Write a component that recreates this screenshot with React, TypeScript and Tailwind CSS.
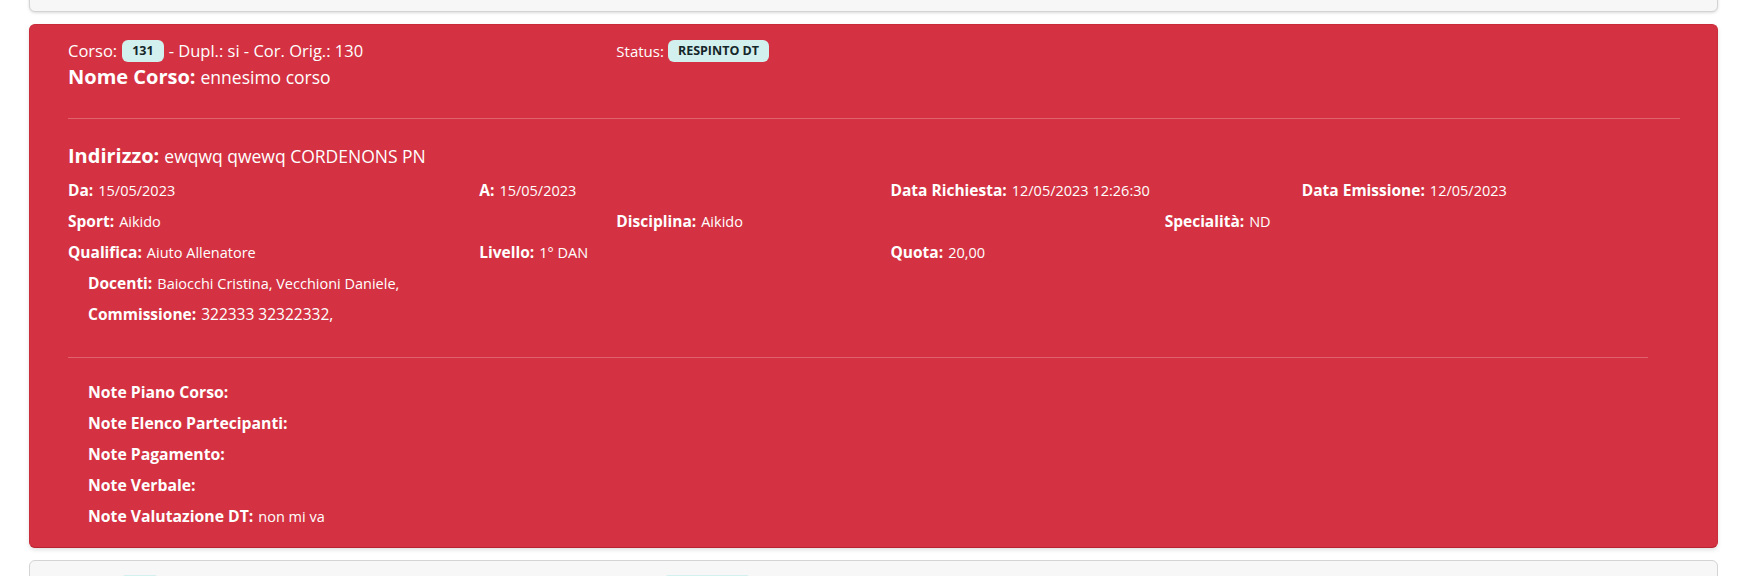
import type { ReactElement, ReactNode } from 'react'

type Field = { label: string; value?: string }

function Badge({ children }: { children: ReactNode }): ReactElement {
  return (
    <span className="inline-flex h-[22px] items-center rounded-[6px] bg-[#d2f0ed] px-[10px] text-[12.5px] font-bold text-[#15262b]">
      {children}
    </span>
  )
}

function Item({ label, value, wide = false }: Field & { wide?: boolean }): ReactElement {
  return (
    <div className="flex h-[31px] items-center whitespace-nowrap">
      <span className={wide ? 'text-[15.75px] font-bold' : 'text-[15.5px] font-bold'}>{label}:</span>
      {value ? <span className="ml-[5px] text-[14.5px]">{value}</span> : null}
    </div>
  )
}

const notes: Field[] = [
  { label: 'Note Piano Corso' },
  { label: 'Note Elenco Partecipanti' },
  { label: 'Note Pagamento' },
  { label: 'Note Verbale' },
  { label: 'Note Valutazione DT', value: 'non mi va' }
]

export default function App(): ReactElement {
  return (
    <div className="h-[576px] overflow-hidden bg-white pl-[29px] pr-[28px] font-['Open_Sans',sans-serif] text-white">
      <div className="-mt-[40px] h-[52px] rounded-[6px] border border-[#d4d4d4] bg-[#f7f7f7] shadow-[0_1px_3px_rgba(0,0,0,0.15)]" />

      <div className="mt-[12px] rounded-[6px] border border-[#c92c3b] border-b-[#b8232f] bg-[#d43242] pb-[15px] pl-[38px] pt-[14px] shadow-[0_2px_4px_rgba(0,0,0,0.12)]">
        <div className="grid h-[22px] w-[1645px] grid-cols-3 items-center text-[16.5px]">
          <div className="flex items-center gap-[5px] whitespace-nowrap">
            <span>Corso:</span>
            <Badge>131</Badge>
            <span>- Dupl.: si - Cor. Orig.: 130</span>
          </div>
          <div className="flex items-center gap-[4px] whitespace-nowrap">
            <span className="text-[15px]">Status:</span>
            <Badge>RESPINTO DT</Badge>
          </div>
        </div>
        <div className="mt-[5px] flex h-[22px] items-center whitespace-nowrap">
          <span className="text-[20px] font-bold">Nome Corso:</span>
          <span className="ml-[5px] text-[17.5px]">ennesimo corso</span>
        </div>

        <div className="mr-[37px] mt-[30px] h-px bg-[#e0626e]" />

        <div className="mt-[22px] flex h-[30px] items-center whitespace-nowrap">
          <span className="text-[20px] font-bold">Indirizzo:</span>
          <span className="ml-[5px] text-[17.5px]">ewqwq qwewq CORDENONS PN</span>
        </div>

        <div className="mt-[4px] w-[1645px]">
          <div className="grid grid-cols-4">
            <Item label="Da" value="15/05/2023" />
            <Item label="A" value="15/05/2023" />
            <Item label="Data Richiesta" value="12/05/2023 12:26:30" />
            <Item label="Data Emissione" value="12/05/2023" />
          </div>
          <div className="grid grid-cols-3">
            <Item label="Sport" value="Aikido" />
            <Item label="Disciplina" value="Aikido" />
            <Item label="Specialità" value="ND" />
          </div>
          <div className="grid grid-cols-4">
            <Item label="Qualifica" value="Aiuto Allenatore" />
            <Item label="Livello" value="1° DAN" />
            <Item label="Quota" value="20,00" />
          </div>
          <div className="pl-[20px]">
            <Item label="Docenti" value="Baiocchi Cristina, Vecchioni Daniele," />
            <div className="flex h-[31px] items-center whitespace-nowrap">
              <span className="text-[15.5px] font-bold">Commissione:</span>
              <span className="ml-[5px] text-[15.5px]">322333 32322332,</span>
            </div>
          </div>
        </div>

        <div className="mr-[69px] mt-[27px] h-px bg-[#e0626e]" />

        <div className="mt-[19px] pl-[20px]">
          {notes.map((note) => (
            <Item key={note.label} label={note.label} value={note.value} wide />
          ))}
        </div>
      </div>

      {/* next course card, only its top edge is in view */}
      <div className="mt-[12px] h-[200px] rounded-[6px] border border-[#d4d4d4] bg-[#f7f7f7] pt-[14px]">
        <div className="flex">
          <span aria-hidden className="ml-[90px] h-[22px] w-[40px] rounded-[6px] bg-[#d2f0ed]" />
          <span aria-hidden className="ml-[503px] h-[22px] w-[89px] rounded-[6px] bg-[#d2f0ed]" />
        </div>
      </div>
    </div>
  )
}
